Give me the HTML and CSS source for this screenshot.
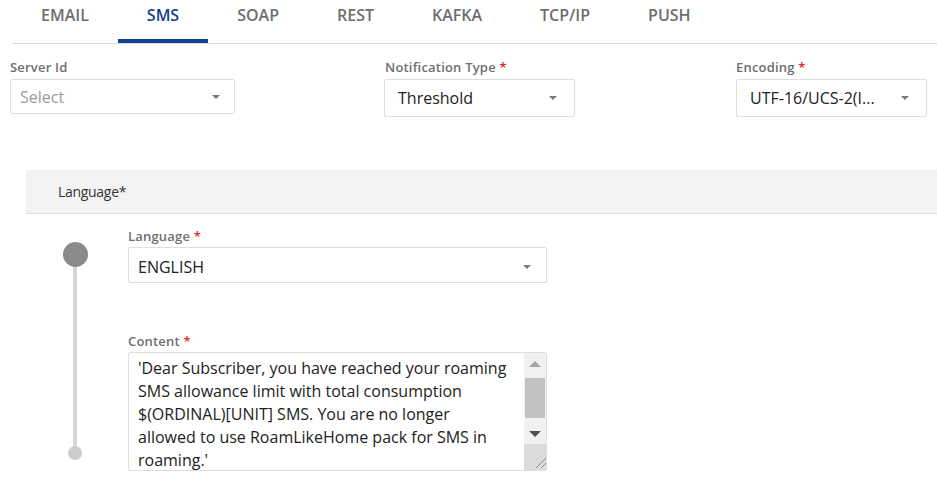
FILE: index.html
```html
<!DOCTYPE html>
<html lang="en">
<head>
<meta charset="utf-8">
<title>SMS Notification</title>
<link rel="stylesheet" href="styles.css">
</head>
<body>
<nav class="tabs">
  <div class="tab">EMAIL</div>
  <div class="tab active">SMS</div>
  <div class="tab">SOAP</div>
  <div class="tab">REST</div>
  <div class="tab">KAFKA</div>
  <div class="tab">TCP/IP</div>
  <div class="tab">PUSH</div>
</nav>

<div class="fields">
  <div class="field field-server">
    <div class="lbl">Server Id</div>
    <div class="select select-short">
      <span class="value placeholder">Select</span>
      <span class="caret"></span>
    </div>
  </div>
  <div class="field field-type">
    <div class="lbl">Notification Type <span class="req">*</span></div>
    <div class="select">
      <span class="value">Threshold</span>
      <span class="caret"></span>
    </div>
  </div>
  <div class="field field-enc">
    <div class="lbl">Encoding <span class="req">*</span></div>
    <div class="select">
      <span class="value">UTF-16/UCS-2(I...</span>
      <span class="caret"></span>
    </div>
  </div>
</div>

<section class="lang">
  <div class="lang-head">Language*</div>
  <div class="lang-body">
    <div class="timeline">
      <span class="dot"></span>
      <span class="vline"></span>
      <span class="dot dot-end"></span>
    </div>
    <div class="lang-form">
      <div class="field">
        <div class="lbl">Language <span class="req">*</span></div>
        <div class="select select-lang">
          <span class="value">ENGLISH</span>
          <span class="caret"></span>
        </div>
      </div>
      <div class="field field-content">
        <div class="lbl">Content <span class="req">*</span></div>
        <div class="textarea">
          <div class="ta-text">'Dear Subscriber, you have reached your roaming
SMS allowance limit with total consumption
$(ORDINAL)[UNIT] SMS. You are no longer
allowed to use RoamLikeHome pack for SMS in
roaming.'</div>
          <div class="scrollbar">
            <div class="sb-btn"><span class="arrow-up"></span></div>
            <div class="sb-track"><div class="sb-thumb"></div></div>
            <div class="sb-btn"><span class="arrow-down"></span></div>
            <div class="sb-resizer">
              <svg width="26" height="26" viewBox="0 0 26 26">
                <line x1="12" y1="24" x2="22" y2="14" stroke="#8a8a8a" stroke-width="1"/>
                <line x1="17" y1="24" x2="22" y2="19" stroke="#8a8a8a" stroke-width="1"/>
              </svg>
            </div>
          </div>
        </div>
      </div>
    </div>
  </div>
</section>
</body>
</html>
```
FILE: styles.css
```css
* { box-sizing: border-box; }

body {
  margin: 0;
  background: #ffffff;
  font-family: "Open Sans", "Noto Sans", "Liberation Sans", sans-serif;
  color: #333333;
}

/* Tabs */
.tabs {
  display: flex;
  margin-left: 12px;
  border-bottom: 1px solid #dddddd;
}
.tab {
  padding: 4px 29px 0;
  height: 43px;
  line-height: 22px;
  font-size: 16px;
  font-weight: 600;
  color: #6e6e6e;
  border-bottom: 4px solid transparent;
}
.tab.active {
  color: #124191;
  border-bottom-color: #124191;
}

/* Top fields */
.fields {
  display: flex;
  align-items: flex-start;
  margin-top: 14px;
  padding-left: 10px;
}
.field-server { width: 225px; }
.field-type { width: 191px; margin-left: 149px; }
.field-enc { width: 191px; margin-left: 161px; }

.lbl {
  font-size: 13px;
  font-weight: 600;
  line-height: 18px;
  color: #6e6e6e;
  margin-bottom: 3px;
  letter-spacing: 0.2px;
}
.field-type .lbl { padding-left: 1px; }
.req { color: #e02a2a; }

.select {
  display: flex;
  align-items: center;
  justify-content: space-between;
  height: 38px;
  border: 1px solid #dedede;
  border-radius: 2px;
  padding: 0 17px 0 13px;
  font-size: 16px;
  color: #222222;
}
.select-short {
  height: 35px;
  padding: 0 14px 0 9px;
}
.select-lang {
  height: 36px;
  padding: 4px 15px 0 9px;
}
.value { white-space: nowrap; }
.placeholder { color: #9a9a9a; }
.caret {
  width: 0;
  height: 0;
  border-left: 4px solid transparent;
  border-right: 4px solid transparent;
  border-top: 4px solid #7a7a7a;
}

/* Language section */
.lang {
  margin: 53px 0 0 26px;
}
.lang-head {
  height: 44px;
  background: #f3f3f3;
  border-bottom: 1px solid #dcdcdc;
  padding-left: 32px;
  font-size: 14px;
  line-height: 43px;
  color: #333333;
  letter-spacing: -0.3px;
}
.lang-body {
  display: flex;
}
.timeline {
  width: 102px;
  padding: 28px 0 0 37px;
  display: flex;
  flex-direction: column;
  align-items: flex-start;
}
.dot {
  width: 25px;
  height: 25px;
  border-radius: 50%;
  background: #8a8a8a;
}
.vline {
  width: 4px;
  height: 179px;
  margin-left: 10px;
  background: #d6d6d6;
}
.dot-end {
  width: 14px;
  height: 14px;
  margin-left: 5px;
  background: #cccccc;
}
.lang-form {
  width: 419px;
  padding-top: 13px;
}
.lang-form .lbl { margin-bottom: 2px; }
.field-content { margin-top: 49px; }

.textarea {
  display: flex;
  height: 119px;
  border: 1px solid #dedede;
  border-radius: 2px;
  overflow: hidden;
}
.ta-text {
  flex: 1;
  padding: 4px 0 0 9px;
  font-size: 16px;
  line-height: 23px;
  color: #222222;
  white-space: pre-line;
  overflow: hidden;
}
.scrollbar {
  width: 22px;
  display: flex;
  flex-direction: column;
  background: #f1f1f1;
}
.sb-btn {
  height: 21px;
  display: flex;
  align-items: center;
  justify-content: center;
}
.arrow-up {
  width: 0; height: 0;
  border-left: 6px solid transparent;
  border-right: 6px solid transparent;
  border-bottom: 6px solid #a3a3a3;
}
.arrow-down {
  width: 0; height: 0;
  border-left: 6px solid transparent;
  border-right: 6px solid transparent;
  border-top: 6px solid #505050;
}
.sb-track {
  flex: 1;
  padding: 4px 1px 0;
}
.sb-thumb {
  height: 40px;
  background: #c1c1c1;
}
.sb-resizer {
  height: 26px;
  background: #dcdcdc;
}
.sb-resizer svg { display: block; }
```
